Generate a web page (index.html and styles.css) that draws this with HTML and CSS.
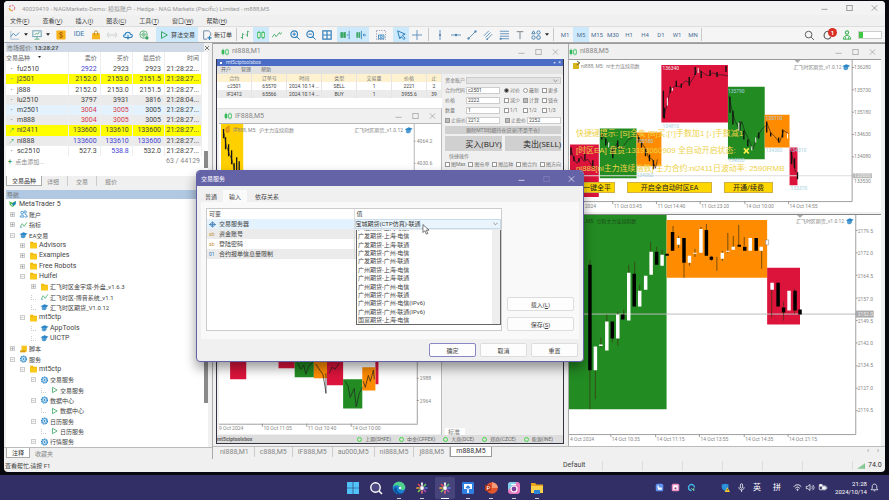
FILE: index.html
```html
<!DOCTYPE html>
<html lang="zh-CN">
<head>
<meta charset="utf-8">
<title>MetaTrader 5</title>
<link rel="stylesheet" href="styles.css">
</head>
<body>
<svg class="sprite" aria-hidden="true">
  <symbol id="candles" viewBox="0 0 12 12"><path d="M3.500 1v10M8.500 1v10" stroke="#35b85a"/><rect x="2" y="3" width="3" height="6" fill="#e9f8ec" stroke="#35b85a"/><rect x="7" y="3" width="3" height="6" fill="#e9f8ec" stroke="#35b85a"/></symbol>
  <symbol id="candles2" viewBox="0 0 12 12"><path d="M3 1v10M9 1v10" stroke="#35b85a"/><rect x="1" y="3" width="4" height="6" fill="#35b85a"/><rect x="7" y="3" width="4" height="6" fill="#d8f5de" stroke="#35b85a"/></symbol>
  <symbol id="folder" viewBox="0 0 12 12"><path d="M1 1h4l1 1.500h5V11H1z" fill="#f2b705"/><path d="M1 4h10v7H1z" fill="#fbc918"/></symbol>
  <symbol id="cap" viewBox="0 0 12 12"><path d="M0 5l6-3 6 2-5 3.500z" fill="#2a86c8"/><path d="M2.500 6v3.500c2 1.500 4.500 1 6-.5V6.500L7 8z" fill="#4aa3dc" stroke="#1d6fae" stroke-width=".6"/></symbol>
  <symbol id="gear" viewBox="0 0 12 12"><circle cx="6" cy="6" r="4.600" fill="#e3f2fd" stroke="#2a86c8" stroke-width="1.600" stroke-dasharray="2.400 1"/><circle cx="6" cy="6" r="3.500" fill="none" stroke="#2a86c8"/><path d="M5 4l3 2-3 2z" fill="#2a86c8"/></symbol>
  <symbol id="play" viewBox="0 0 12 12"><path d="M3 2l7 4-7 4z" fill="none" stroke="#3aa662" stroke-width="1.200"/></symbol>
  <symbol id="wave" viewBox="0 0 12 12"><path d="M1 9l3-5 3 4 4-6" fill="none" stroke="#3aa662" stroke-width="1.100"/><path d="M1 10l3-1" stroke="#2a86c8"/></symbol>
  <symbol id="people" viewBox="0 0 12 12"><g fill="none" stroke="#2a86c8" stroke-width="1.200"><circle cx="4" cy="4" r="2"/><path d="M1 10.500c0-4 6-4 6 0z"/><circle cx="8.500" cy="3" r="1.800"/><path d="M8 6.500c3 0 3.500 2 3.500 4H8.500"/></g></symbol>
  <symbol id="script" viewBox="0 0 12 12"><path d="M3 1h8v9H3z" fill="#f5c21b"/><path d="M1 8h8v3H1z" fill="#d99a0b"/></symbol>
  <symbol id="logo" viewBox="0 0 12 12"><path d="M1 2l5 2 5-3-1 6-4 4-4-4z" fill="#4cb648"/><path d="M5 6l6-4v4L7 9z" fill="#1d83c4"/><path d="M3 5l3 2v3z" fill="#fff"/></symbol>
  <symbol id="min" viewBox="0 0 12 12"><path d="M1.500 8h9" stroke="currentColor"/></symbol>
  <symbol id="max" viewBox="0 0 12 12"><rect x="2" y="2" width="8" height="8" fill="none" stroke="currentColor"/></symbol>
  <symbol id="close" viewBox="0 0 12 12"><path d="M2 2l8 8M10 2l-8 8" stroke="currentColor"/></symbol>
  <symbol id="caret" viewBox="0 0 6 4"><path d="M0 0h6L3 4z" fill="#222"/></symbol>
  <symbol id="chev" viewBox="0 0 6 4"><path d="M.5.5L3 3 5.500.5" fill="none" stroke="#777" stroke-width=".9"/></symbol>
  <symbol id="spider" viewBox="0 0 14 14"><g stroke-width="1.700" stroke-linecap="round"><path d="M7 2v2" stroke="#fff"/><path d="M3.500 3.500L5 5" stroke="#e24b5b"/><path d="M10.500 3.500L9 5" stroke="#58c06a"/><path d="M2 7h2" stroke="#f0ab32"/><path d="M12 7h-2" stroke="#5d78e0"/><path d="M3.500 10.500L5 9" stroke="#83c94b"/><path d="M10.500 10.500L9 9" stroke="#b34fb5"/><path d="M7 12v-2" stroke="#e5658b"/></g><circle cx="7" cy="7" r="1.900" fill="#fff"/></symbol>
</svg>

<div class="desktop">
<main class="app">
  <header class="titlebar">
    <svg class="ic8" viewBox="0 0 12 12"><circle cx="6" cy="6" r="4" fill="none" stroke="#e58b9b" stroke-width="2" stroke-dasharray="3 1.500"/><path d="M2 6a4 4 0 0 0 4 4" fill="none" stroke="#e2b54e" stroke-width="2"/></svg>
    <span>40029419 - NAGMarkets-Demo: 模拟账户 - Hedge - NAG Markets (Pacific) Limited - m888,M5</span>
    <div class="winctl wide"><button aria-label="最小化"><svg><use href="#min"/></svg></button><button aria-label="最大化"><svg><use href="#max"/></svg></button><button aria-label="关闭"><svg><use href="#close"/></svg></button></div>
  </header>
  <nav class="menubar"><a href="#">文件(<u>F</u>)</a><a href="#">查看(<u>V</u>)</a><a href="#">插入(<u>I</u>)</a><a href="#">图表(<u>C</u>)</a><a href="#">工具(<u>T</u>)</a><a href="#">窗口(<u>W</u>)</a><a href="#">帮助(<u>H</u>)</a></nav>

  <div class="toolbar">
    <button class="tool" aria-label="图表类型"><svg viewBox="0 0 12 12"><path d="M1 1v10h10" stroke="#9bb6cc"/><path d="M1 8l3-4 3 3 4-4" stroke="#3b7db4"/></svg></button>
    <button class="drop" aria-label="更多图表"><svg><use href="#caret"/></svg></button>
    <button class="tool" aria-label="模板"><svg viewBox="0 0 12 12"><rect x="1" y="1" width="10" height="7" stroke="#5795a8"/><path d="M3 6l2-2 2 1 2-3M3 11h6M6 8v3" stroke="#4aa87c"/></svg></button>
    <button class="drop" aria-label="更多模板"><svg><use href="#caret"/></svg></button>
    <button class="tool wide" aria-label="美元"><svg viewBox="0 0 12 12"><rect x=".5" y=".5" width="11" height="11" rx="1" fill="#f6b31b"/><path d="M8 4c-1-1.500-4-1-4 .3C4 6.300 8 5.500 8 7.500 8 9.500 4 9.300 4 8M6 2v8" stroke="#a35f00"/></svg></button>
    <button class="tool ide">IDE</button>
    <button class="tool" aria-label="市场"><svg viewBox="0 0 12 12"><path d="M1.500 4h9l.5 7H1z" fill="#f6b31b"/><path d="M4 6V3c0-2.500 4-2.500 4 0v3" stroke="#b9770a"/></svg></button>
    <button class="tool" aria-label="信号"><svg viewBox="0 0 12 12"><path d="M2 3c-1.500 2-1.500 4 0 6M4 4.500c-.8 1-.8 2 0 3M10 3c1.500 2 1.500 4 0 6M8 4.500c.8 1 .8 2 0 3" stroke="#b9bfc4"/><circle cx="6" cy="6" r=".8" fill="#b9bfc4"/></svg></button>
    <button class="tool" aria-label="云"><svg viewBox="0 0 12 12"><path d="M3 9C0 9 0 5.500 2.500 5.500 3 1.500 8.500 2 9 5c3 0 3 4 0 4z" stroke="#2e7fbc" stroke-width="1.300" fill="#d9edf9"/><path d="M6 6v5M4.500 9.500L6 11l1.500-1.500" stroke="#2e7fbc"/></svg></button>
    <button class="tool" aria-label="网络"><svg viewBox="0 0 12 12"><circle cx="5.500" cy="5.500" r="4.500" stroke="#55ad75"/><circle cx="5.500" cy="5.500" r="2" stroke="#55ad75"/><path d="M1 5.500h9M5.500 1v9" stroke="#8ac89f"/><circle cx="9.500" cy="9.500" r="2" fill="#3aa662"/></svg></button>
    <button class="tool label on algo"><svg><use href="#play"/></svg>算法交易</button>
    <button class="tool label"><svg viewBox="0 0 12 12"><path d="M2 1h6l2.500 2.500V7M6 11H2V1" stroke="#587a99"/><path d="M9 7v5M6.500 9.500h5" stroke="#2e7fbc" stroke-width="1.400"/></svg>新订单</button>
    <i class="sep"></i>
    <button class="tool" aria-label="柱状图"><svg viewBox="0 0 12 12"><path d="M3 4v7M1 9h2M3 5h2M9 1v7M7 6h2M9 2h2" stroke="#3aa662"/></svg></button>
    <button class="tool on" aria-label="蜡烛图"><svg><use href="#candles"/></svg></button>
    <button class="tool" aria-label="折线图"><svg viewBox="0 0 12 12"><path d="M0 9l3-4 2 3 4-5 1 2 2-2" stroke="#3aa662"/></svg></button>
    <button class="tool gap" aria-label="放大"><svg viewBox="0 0 12 12"><circle cx="5" cy="5" r="4" stroke="#2e7fbc" stroke-width="1.300"/><path d="M8 8l3.500 3.500M3 5h4M5 3v4" stroke="#2e7fbc" stroke-width="1.200"/></svg></button>
    <button class="tool" aria-label="缩小"><svg viewBox="0 0 12 12"><circle cx="5" cy="5" r="4" stroke="#2e7fbc" stroke-width="1.300"/><path d="M8 8l3.500 3.500M3 5h4" stroke="#2e7fbc" stroke-width="1.200"/></svg></button>
    <button class="tool" aria-label="平铺"><svg viewBox="0 0 12 12"><path d="M1 1h10v10H1zM6 1v10M1 6h10" stroke="#2e7fbc" stroke-width="1.400"/></svg></button>
    <button class="tool on gap" aria-label="自动滚动"><svg viewBox="0 0 12 12"><path d="M1 3h2v6H1zM4.500 3h2v6h-2z" fill="#3aa662" stroke="#3aa662"/><path d="M11 1v10M8 6h2" stroke="#2e7fbc"/></svg></button>
    <button class="tool on" aria-label="图表平移"><svg viewBox="0 0 12 12"><path d="M1 3h1v6H1zM3.500 3h1v6h-1z" fill="#3aa662" stroke="#3aa662"/><path d="M6.500 1v10M12 6H8.500M10 4.500L8.500 6 10 7.500" stroke="#2e7fbc"/></svg></button>
    <button class="tool gap2" aria-label="截图"><svg viewBox="0 0 12 12"><rect x=".5" y=".5" width="11" height="11" stroke="#88a" stroke-dasharray="1.500 1.500"/><path d="M3 6h6.500v4.500H3z" stroke="#2e7fbc"/><circle cx="6.300" cy="8" r="1.300" stroke="#2e7fbc"/></svg></button>
    <button class="tool on gap2" aria-label="光标"><svg viewBox="0 0 12 12"><path d="M2 1l9 4-3.500 1.500L11 10l-1.500 1.300L6 8l-1.500 2.500z" stroke="#2e7fbc" stroke-width="1.200"/></svg></button>
    <button class="tool" aria-label="十字线"><svg viewBox="0 0 12 12"><path d="M6 0v12M0 6h12" stroke="#4e86b4"/></svg></button>
    <i class="sep split"></i>
    <button class="tool" aria-label="垂直线"><svg viewBox="0 0 12 12"><path d="M6 0v12" stroke="#4e86b4"/><circle cx="6" cy="6" r="1.300" fill="#4e86b4"/></svg></button>
    <button class="tool" aria-label="水平线"><svg viewBox="0 0 12 12"><path d="M0 6h12" stroke="#4e86b4"/><circle cx="6" cy="6" r="1.500" fill="#4e86b4"/></svg></button>
    <button class="tool" aria-label="趋势线"><svg viewBox="0 0 12 12"><path d="M2 10l8-8" stroke="#4e86b4"/><circle cx="1.800" cy="10.200" r="1.400" fill="#4e86b4"/><circle cx="10.200" cy="1.800" r="1.400" fill="#4e86b4"/></svg></button>
    <button class="tool" aria-label="通道"><svg viewBox="0 0 12 12"><path d="M1 7l6-6M5 11l6-6M3 9l6-6" stroke="#4e86b4"/><circle cx="5" cy="11" r="1" fill="#4e86b4"/></svg></button>
    <button class="tool" aria-label="斐波那契"><svg viewBox="0 0 12 12"><path d="M1 1.500h11M1 4.500h11M1 7.500h11M1 10.500h11" stroke="#4e86b4"/><circle cx="2" cy="10.500" r="1.300" fill="#4e86b4"/></svg></button>
    <button class="tool" aria-label="文字"><svg viewBox="0 0 12 12"><path d="M2 2h8M6 2v9" stroke="#7d8790" stroke-width="1.200"/></svg></button>
    <button class="tool" aria-label="对象"><svg viewBox="0 0 12 12"><g stroke="#4e86b4" stroke-width="1.200"><path d="M3 1l2 3.500H1z"/><circle cx="9" cy="3" r="2"/><circle cx="3" cy="9" r="2"/><rect x="7" y="7" width="4" height="4" rx="1"/></g></svg></button>
    <button class="drop" aria-label="更多对象"><svg><use href="#caret"/></svg></button>
    <i class="sep split"></i>
    <button class="tool tf">M1</button><button class="tool tf on">M5</button><button class="tool tf">M15</button><button class="tool tf">M30</button><button class="tool tf">H1</button><button class="tool tf">H4</button><button class="tool tf">D1</button><button class="tool tf">W1</button><button class="tool tf">MN</button>
    <i class="sep"></i>
    <div class="right">
      <button class="tool" aria-label="搜索"><svg viewBox="0 0 12 12"><circle cx="5.500" cy="5.500" r="4" stroke="#444"/><path d="M8.500 8.500L12 12" stroke="#444"/></svg></button>
      <button class="tool bell" aria-label="通知"><svg viewBox="0 0 12 12"><path d="M8 2C3 0 0 5 2 9c2 3 7 2 7-1" stroke="#555" stroke-width="1.300"/></svg><b>1</b></button>
      <button class="tool" aria-label="账户"><svg viewBox="0 0 12 12"><circle cx="6" cy="3" r="2" stroke="#45b55b" stroke-width="1.300"/><path d="M1.500 11c0-6 9-6 9 0zM4 11V8M8 11V8" stroke="#45b55b" stroke-width="1.200"/></svg></button>
      <div class="level" role="img" aria-label="连接"><i></i></div>
    </div>
  </div>

  <div class="workspace">
    <aside class="side">
      <h2 class="panel-title">市场报价: <b>13:28:27</b><svg class="x"><use href="#close"/></svg></h2>
      <div class="market">
        <table>
          <thead><tr><th class="sym">交易品种 <svg><use href="#caret"/></svg></th><th>卖价</th><th>买价</th><th>最后价</th><th class="time">时间</th></tr></thead>
          <tbody>
            <tr><td><i>•</i>fu2510</td><td class="b">2922</td><td>2923</td><td>2923</td><td>21:28:22...</td></tr>
            <tr class="y"><td><i>•</i>j2501</td><td>2152.0</td><td>2153.0</td><td>2151.5</td><td>21:28:27...</td></tr>
            <tr><td><i>•</i>j888</td><td>2152.0</td><td>2153.0</td><td>2151.5</td><td>21:28:27...</td></tr>
            <tr class="g"><td><i>•</i>lu2510</td><td>3797</td><td>3931</td><td>3816</td><td>21:28:04...</td></tr>
            <tr class="s"><td><i>•</i>m2501</td><td class="r">3004</td><td class="r">3005</td><td>3005</td><td>21:28:27...</td></tr>
            <tr class="g"><td><i>•</i>m888</td><td class="r">3004</td><td class="r">3005</td><td>3005</td><td>21:28:27...</td></tr>
            <tr class="y"><td><i class="up">↗</i>ni2411</td><td>133600</td><td>133610</td><td>133600</td><td>21:28:27...</td></tr>
            <tr class="g"><td><i class="up">↗</i>ni888</td><td class="b">133600</td><td class="b">133610</td><td class="b">133600</td><td>21:28:27...</td></tr>
            <tr><td><i>•</i>sc2510</td><td>527.3</td><td class="b">538.8</td><td>532.0</td><td>21:28:27...</td></tr>
          </tbody>
        </table>
        <div class="add"><span><b>+</b> 点击添加...</span><span>63 / 44129</span></div>
      </div>
      <div class="tabs"><button class="act">交易品种</button><button>详细</button><button>交易</button><button>报价</button></div>
      <h2 class="panel-title nav-title">导航</h2>
      <ul class="tree">
        <li class="l0"><svg><use href="#logo"/></svg>MetaTrader 5</li>
        <li class="l1"><i>+</i><svg><use href="#people"/></svg><span>账户</span></li>
        <li class="l1"><i>+</i><svg><use href="#wave"/></svg><span>指标</span></li>
        <li class="l1"><i>−</i><svg><use href="#cap"/></svg><span>EA交易</span></li>
        <li class="l2"><i>+</i><svg><use href="#folder"/></svg>Advisors</li>
        <li class="l2"><i>+</i><svg><use href="#folder"/></svg>Examples</li>
        <li class="l2"><i>+</i><svg><use href="#folder"/></svg>Free Robots</li>
        <li class="l2"><i>−</i><svg><use href="#folder"/></svg>Huifei</li>
        <li class="l3"><i>+</i><svg><use href="#folder"/></svg><span>汇飞时区金字塔-外盘_v1.6.3</span></li>
        <li class="l3 leaf"><i></i><svg><use href="#wave"/></svg><span>汇飞时区-博音系统_v1.1</span></li>
        <li class="l3 leaf"><i></i><svg><use href="#cap"/></svg><span>汇飞时区期货_V1.0.12</span></li>
        <li class="l2"><i>−</i><svg><use href="#folder"/></svg>mt5ctp</li>
        <li class="l3 leaf"><i></i><svg><use href="#cap"/></svg>AppTools</li>
        <li class="l3 leaf"><i></i><svg><use href="#cap"/></svg>UICTP</li>
        <li class="l1"><i>+</i><svg><use href="#script"/></svg><span>脚本</span></li>
        <li class="l1"><i>−</i><svg><use href="#gear"/></svg><span>服务</span></li>
        <li class="l2"><i>−</i><svg><use href="#folder"/></svg>mt5ctp</li>
        <li class="l3"><i>−</i><svg><use href="#gear"/></svg><span>交易服务</span></li>
        <li class="l4 leaf"><i></i><svg><use href="#play"/></svg><span>交易服务</span></li>
        <li class="l3"><i>−</i><svg><use href="#gear"/></svg><span>数据中心</span></li>
        <li class="l4 leaf"><i></i><svg><use href="#play"/></svg><span>数据中心</span></li>
        <li class="l3"><i>−</i><svg><use href="#gear"/></svg><span>日历服务</span></li>
        <li class="l4 leaf"><i></i><svg><use href="#play"/></svg><span>日历服务</span></li>
        <li class="l3"><i>−</i><svg><use href="#gear"/></svg><span>行情服务</span></li>
      </ul>
      <div class="tabs bottom"><button class="act">注释</button><button>收藏夹</button></div>
    </aside>

    <div class="center">
      <div class="mdi">
        <section class="m1">
          <header class="child-title"><svg class="ic8"><use href="#candles2"/></svg>ni888,M1<div class="winctl"><button aria-label="最小化"><svg><use href="#min"/></svg></button><button aria-label="最大化"><svg><use href="#max"/></svg></button><button aria-label="关闭"><svg><use href="#close"/></svg></button></div></header>
          <div class="toolbox">
            <div class="tb-title"><i></i>mt5ctptoolsbox<span>▪ ×</span></div>
            <div class="tb-menu"><a href="#">开户</a><a href="#">管理</a><a href="#">帮助</a></div>
            <div class="tb-body">
              <div class="tb-left">
                <table class="orders">
                  <thead><tr><th>合约</th><th>订单号</th><th>时间</th><th>类型</th><th>交易量</th><th>价格</th><th class="cut">止</th></tr></thead>
                  <tbody><tr><td>c2501</td><td>65570</td><td>2024.10.14 ...</td><td>SELL</td><td>1</td><td>2221</td><td>2</td></tr>
                  <tr class="g"><td>IF2412</td><td>65566</td><td>2024.10.14 ...</td><td>BUY</td><td>1</td><td>3955.6</td><td>39</td></tr></tbody>
                </table>
                <section class="if-window">
                  <header class="child-title"><svg class="ic8"><use href="#candles2"/></svg>IF888,M5<div class="winctl"><button aria-label="最小化"><svg><use href="#min"/></svg></button><button aria-label="最大化"><svg><use href="#max"/></svg></button><button aria-label="关闭"><svg><use href="#close"/></svg></button></div></header>
                  <svg class="chart" viewBox="221 124 220 308" preserveAspectRatio="xMinYMin meet">
                    <path d="M221 124h220v308H221z" fill="#fff"/>
                    <path d="M223 125h22v70h-22z" fill="#ffd000"/>
                    <path d="M225.500 130v9M227.500 138v12M230.500 145v12M233.500 151v14M236 164v9M238.500 158v15M241 162v11" stroke="#15151f" stroke-width="1.300"/>
                    <path d="M226 134l2 12 3 8 3 7 3 12" stroke="#15151f" fill="none" stroke-width=".6"/>
                    <path d="M231 127v6h-3v-4zM236 129h4" stroke="#c77414" fill="#f0a21a" stroke-width=".7"/>
                    <text x="235" y="133">IF888, M5:  沪主力连续指数</text>
                    <text x="355" y="133">汇飞时区期货_v1.0.12</text>
                    <use href="#cap" x="405" y="127" width="8" height="8"/>
                    <path d="M221 124.500h220M414.500 125v230M414 142h2M414 164h2" stroke="#999" stroke-width=".7"/>
                    <text class="ax" x="417" y="144">4064.2</text><text class="ax" x="417" y="166">4030.6</text>
                    <path d="M232 340h16v38h-16zM280 340h16v27h-16zM328 340h16v44h-16zM376 350h3v33h-3z" fill="#dc143c"/>
                    <path d="M296 340h19v36h-19zM344 378h19v29h-19z" fill="#228b22"/>
                    <path d="M315 340h13v37h-13zM363 366h13v23h-13z" fill="#ff8c00"/>
                    <path d="M299 362l3 6 3-4 2 9 3-8 4-4M317 363l4 6 3 4 2 12 1 7v-20M330 372l3-6 3 2 4-6M346 380l3 5 2 11 4-9 2 18 3-13 3-6M364 380l2 6 3-12 2 6 3-11 1 9" stroke="#222" fill="none" stroke-width=".7"/>
                    <path d="M220 422.500h198M417.500 340v82M417 377h2M417 399h2M264 422v3M308 422v3M352 422v3" stroke="#888" stroke-width=".8"/>
                    <text class="ax" x="420" y="379">2988</text><text class="ax" x="420" y="401">2964</text>
                    <text class="ax" x="221" y="428">9 Oct 2024</text><text class="ax" x="265" y="428">10 Oct 11:05</text><text class="ax" x="309" y="428">11 Oct 10:40</text><text class="ax" x="353" y="428">14 Oct 10:00</text>
                  </svg>
                </section>
              </div>
              <form class="order-form">
                <div class="fr"><label for="acc">资金账户</label><span class="combo"><select id="acc"><option></option></select><svg><use href="#chev"/></svg></span></div>
                <div class="fr"><label for="code">合约代码</label><input id="code" type="text" value="c2501"><span class="opts"><label><input type="radio" name="pt" checked>对价</label><label><input type="radio" name="pt">最新</label><label><input type="checkbox">更多</label></span></div>
                <div class="fr"><label for="price">价格</label><input id="price" type="text" value="2222"><span class="opts"><label><input type="checkbox">减少</label><label><input type="checkbox" checked>计算</label><label><input type="checkbox">锁仓</label></span></div>
                <div class="fr"><label for="qty">数量</label><input id="qty" type="text" value="1"><span class="opts"><label><input type="checkbox">1/1</label><label><input type="checkbox">1/2</label><label><input type="checkbox">1/3</label></span></div>
                <div class="fr"><label><input type="checkbox" checked>止损价</label><input type="text" value="2212" aria-label="止损价"><label class="tp"><input type="checkbox" checked>止盈价</label><input type="text" value="2252" aria-label="止盈价"></div>
                <button type="button" class="wide">删除MT5明细持仓记录(不是平仓)</button>
                <div class="bs"><button type="button">买入(BUY)</button><button type="button">卖出(SELL)</button></div>
                <p class="legend">快捷操作</p>
                <div class="quick"><label><input type="checkbox">图Max</label><label><input type="checkbox">图仓单</label><label><input type="checkbox">图品种</label><label><input type="checkbox">图合约</label><label><input type="checkbox">图方向</label></div>
                <span class="std">标准</span>
              </form>
            </div>
            <footer class="tb-status"><b>mt5ctptoolsbox</b><span><i></i>上期(SHFE)</span><span><i></i>中金(CFFEX)</span><span><i></i>大商(DCE)</span><span><i></i>郑商(CZCE)</span><span><i></i>能源(INE)</span></footer>
          </div>
        </section>

        <div class="charts">
          <section class="ni">
            <header class="child-title"><svg class="ic8"><use href="#candles2"/></svg>ni888,M5<div class="winctl"><button aria-label="最小化"><svg><use href="#min"/></svg></button><button aria-label="最大化"><svg><use href="#max"/></svg></button><button aria-label="关闭"><svg><use href="#close"/></svg></button></div></header>
            <div class="plot">
              <svg class="chart" viewBox="569 59 312 153" preserveAspectRatio="xMinYMin meet">
                <path d="M570 144h29v53h-29zM662 64h67v58h-67zM791 147h8v38h-8z" fill="#dc143c"/>
                <path d="M600 128h37v50h-37zM729 86h37v73h-37z" fill="#228b22"/>
                <path d="M637 132h25v34h-25zM766 114h25v33h-25z" fill="#ff8c00"/>
                <path d="M570 175.500h284" stroke="#ddd"/>
                <path d="M571 149l3 10 3 4 4-7 3 5 4-2 4 6 4 4M602 133l4 6 4 8 3 8 4-12 4 7 4-6 4-5 4-2 4-4M638 134l4 8 4 6 3 9 4 2 3 9 2-9M664 118l4-16 3-13 5-4 5 1 5-6 5 2 3-5 5-9 5 4 5 3 5-3 5 2 5 0 5 1M730 95l3 14 3 11 4 8 3-7 3 10 4 8 4 10 4-12 5-8 4-4M768 122l4 10 4 4 5 6 4-12 5 3M792 150l3 12 2 10" fill="none" stroke="#1a1a1a" stroke-width=".6"/>
                <path d="M571 147v8M574 156v5M579 158v4M585 153v7M593 160v8M602 133v6M606 138v7M613 147v11M618 140v8M639 136v6M642 142v5M646 148v8M650 154v7M654 160v9M664 90v27M665 107v11M671 86v6M677 80v6M682 83v4M690 76v9M696 66v8M702 70v7M711 69v6M718 71v5M727 65v6M731 96v16M734 110v14M741 121v9M745 130v9M749 139v7M760 132v6M768 121v11M772 132v4M780 137v5M784 129v8M793 151v13M796 158v10M799 172v7" stroke="#111" stroke-width="1.400"/>
                <path d="M668 97v8M673 87v3M699 67v5M740 122v8M753 146v4M757 137v5M609 142v5M789 133v5" stroke="#fff" stroke-width="1"/>
                <path d="M569 201.500h285V59M854 66.500h2M854 89h2M854 111.500h2M854 134h2M854 156.500h2M613 201v3M657 201v3M701 201v3M746 201v3M790 201v3" fill="none" stroke="#888" stroke-width=".8"/>
                <path d="M796 59h6l-3 3z" fill="#aaa"/>
                <path d="M573 62h5v-1h1v7h-6z" fill="#d7b51b"/><path d="M577 60l3 2-3 2" stroke="#333" fill="none" stroke-width=".7"/>
                <text x="581" y="67">ni888, M5:  ni主力连续指数</text><text x="795" y="68">汇飞时区期货_v1.0.12</text><use href="#cap" x="844" y="62" width="8" height="8"/>
                <g class="ax"><text x="856" y="68">136280</text><text x="856" y="91">135730</text><text x="856" y="113">135180</text><text x="856" y="136">134630</text><text x="856" y="158">134080</text><text x="856" y="183">133530</text>
                <text x="585" y="208">2024</text><text x="614" y="208">11 Oct 03:45</text><text x="658" y="208">11 Oct 14:40</text><text x="702" y="208">11 Oct 23:20</text><text x="747" y="208">14 Oct 10:00</text><text x="791" y="208">14 Oct 14:55</text></g>
                <path d="M854 173h20v5h-20z" fill="#bbb"/><text x="856" y="177" class="wt">133600</text>
                <g class="lb"><text x="663" y="69" class="wt">136340</text><text x="663" y="127">134810</text><text x="729" y="92">135790</text><text x="729" y="162">134020</text><text x="767" y="119">135110</text><text x="767" y="152">134300</text><text x="791" y="152">134310</text><text x="792" y="190">133370</text><text x="637" y="143">135180</text><text x="637" y="177">134060</text></g>
                <g class="tips"><text x="576" y="136">快捷键提示: [S]全卖 [B]买;[↑]手数加1 [↓]手数减1</text><text x="576" y="153">[时区EA] 盘货:13193060909 全自动开启状态:</text><text x="576" y="171">ni888[ni主力连续指数] 主力合约:ni2411日波动率: 2590RMB</text></g>
                <path d="M745 148l5 5M750 148l-5 5" stroke="#fff04a" stroke-width="1.600"/>
              </svg>
              <div class="ea-btns"><button class="b1">一键全平</button><button class="b2">开启全自动时区EA</button><button class="b3">开通/续费</button></div>
            </div>
          </section>
          <section class="m888">
            <svg class="chart" viewBox="569 215 312 232" preserveAspectRatio="xMinYMin meet">
              <path d="M569 215h98v195h-98z" fill="#228b22"/><path d="M667 220h101v58H667z" fill="#ff8c00"/><path d="M768 268h33v57h-33z" fill="#dc143c"/>
              <path d="M569 314.500h288" stroke="#bbb"/>
              <path d="M590 260v150M595.500 371v29M601 338v10M607 315v10M612.500 339v4M618 312v34M624 310v5M629 265v8M635 262v12M640 285v6M651 242v11M657 247v5M662.500 250v5M673.500 226v6M679 236v12M684.500 263v15M690 263v3M695.500 249v8M701.500 227v2M707 224v6M712 256v5M717.500 257v14M723 251v10M728.500 233v20M734 236v12M739.500 225v21M745 237v9M762.500 251v18M772.500 290v28M784.500 302v19M795.500 289v25" stroke="#3c3410" stroke-width=".7"/>
              <path d="M595.500 347v24M601 345v1.500M607 322v29M618 315v24M629 273v48M640 291v16M646 276v14M651.500 252v23M662.500 255v11M679 238v7M690 256v7M695.500 253v1M701.500 229v24M723 253v6M728.500 251v1M734 247v3M751 238v13M762 247v4M773 283v7M790 291v20" stroke="#fff" stroke-width="3.500"/>
              <path d="M766.500 240h3v5h-3z" fill="#fff" stroke="#777" stroke-width=".5"/>
              <path d="M590 265v106M612.500 322v17M623 315v5M634.500 274v33M657 252v13M667.500 254v2M673 232v19M684.500 238v25M707 230v26M712 257v3M740 245v2M745.500 247v4M757 238v13M779 283v24M784.500 308v5M796 291v20M801 310v5" stroke="#000" stroke-width="3.500"/>
              <path d="M569 435.500h288V215M857 230.500h2M857 253h2M857 275.500h2M857 298.500h2M857 321h2M857 343.500h2M857 366.500h2M857 389h2M857 411.500h2M611 435v3M656 435v3M700 435v3M745 435v3M789 435v3" fill="none" stroke="#888" stroke-width=".8"/>
              <path d="M798 215h6l-3 3z" fill="#aaa"/>
              <text x="571" y="223" class="dk">m888, M5:  豆粕主力连续指数</text><text x="797" y="223">汇飞时区期货_v1.0.12</text><use href="#cap" x="847" y="217" width="8" height="8"/>
              <g class="ax"><text x="859" y="233">2179.5</text><text x="859" y="255">2172.0</text><text x="859" y="278">2164.5</text><text x="859" y="301">2157.0</text><text x="859" y="323">2149.5</text><text x="859" y="346">2142.0</text><text x="859" y="368">2134.5</text><text x="859" y="391">2127.0</text><text x="859" y="413">2119.5</text>
              <text x="570" y="442">4 Oct 2024</text><text x="612" y="442">14 Oct 10:35</text><text x="657" y="442">14 Oct 11:15</text><text x="701" y="442">14 Oct 13:55</text><text x="746" y="442">14 Oct 14:35</text><text x="790" y="442">14 Oct 21:15</text></g>
              <path d="M857 311h18v7h-18z" fill="#aaa"/><text x="859" y="316" class="wt">2152.0</text>
            </svg>
          </section>
        </div>
      </div>
      <div class="sheets"><button>ni888,M1</button><button>c888,M5</button><button>IF888,M5</button><button>au000,M5</button><button>ni888,M5</button><button>j888,M5</button><button class="act">m888,M5</button><span>‹</span><span>›</span></div>
    </div>
  </div>
  <footer class="status"><span class="help">查看帮忙,请按 F1</span><span class="profile">Default</span><i></i><i></i><i></i><i></i><i></i><i></i><span class="ping"><svg viewBox="0 0 12 8"><path d="M0 8L12 0v8z" fill="#7cc48a"/><path d="M3 8V5M6 8V3M9 8V1" stroke="#cfe8d4" stroke-width=".6"/></svg>74.0</span></footer>
</main>

<footer class="taskbar">
  <div class="apps">
    <button aria-label="开始"><svg viewBox="0 0 14 14"><path d="M1 1h5.700v5.700H1zM7.300 1H13v5.700H7.300zM1 7.300h5.700V13H1zM7.300 7.300H13V13H7.300z" fill="#4fc3f7"/></svg></button>
    <button aria-label="搜索"><svg viewBox="0 0 14 14"><circle cx="6.500" cy="6.500" r="4.700" fill="#4c4980" stroke="#fff" stroke-width="1.400"/><path d="M10 10l3 3" stroke="#fff" stroke-width="1.600"/></svg></button>
    <button class="run" aria-label="Edge"><svg viewBox="0 0 14 14"><circle cx="7" cy="7" r="6.300" fill="#1c7fd0"/><path d="M1 6C2-1 12-1 13.300 6c.3 4-5 4-5 1.500C8.500 4 3 3 1 6z" fill="#4fd08c"/><path d="M5 7c-1 3 2 6 6 5-4 3-9 0-9-4 1-2 2-2 3-1z" fill="#0b529c"/><circle cx="8" cy="7" r="1.300" fill="#d8f3ff"/></svg></button>
    <button class="run" aria-label="MetaTrader"><svg><use href="#spider"/></svg></button>
    <button class="run cur" aria-label="MetaTrader 5"><svg><use href="#spider"/></svg></button>
    <button class="run" aria-label="传输"><svg viewBox="0 0 14 14"><rect x="1" y="1" width="12" height="12" rx="1" fill="#2f7fe0"/><path d="M3 3h8v5H3z" fill="#fff"/><path d="M7 12V5M5 7l2-2 2 2" stroke="#2f7fe0" stroke-width="1.200" fill="none"/><path d="M7 12V8" stroke="#fff" stroke-width="1.600"/></svg></button>
    <button class="run" aria-label="PowerPoint"><svg viewBox="0 0 14 14"><circle cx="8" cy="7" r="5.800" fill="#e4572e"/><path d="M8 1.200V7h5.800A5.800 5.800 0 0 0 8 1.200z" fill="#f59a78"/><rect x="1" y="4" width="6" height="6" rx="1" fill="#b8371a"/><path d="M3.200 9V5.500h1.300c1.600 0 1.600 2 0 2H3.200" fill="none" stroke="#fff" stroke-width=".8"/></svg></button>
    <button class="run" aria-label="录屏"><svg viewBox="0 0 14 14"><rect x="1" y="1" width="12" height="12" rx="3" fill="#e77cc0"/><path d="M1 4c0-2 1-3 3-3h6l-9 8z" fill="#7fd0ec"/><circle cx="7" cy="8" r="3" fill="#7b3fa0" stroke="#fff" stroke-width="1.200"/><path d="M4 3.500h5" stroke="#fff"/></svg></button>
    <button class="run" aria-label="文件资源管理器"><svg viewBox="0 0 14 14"><path d="M1 2h4l1.500 1.500H13V12H1z" fill="#e8a51c"/><path d="M1 5h12v7H1z" fill="#fbd04a"/><path d="M4 9h6v4H4z" fill="#2b84d6"/></svg></button>
  </div>
  <div class="tray">
    <svg class="t1" viewBox="0 0 12 12"><rect x="1" y="1" width="10" height="10" rx="2" fill="#5f92f0"/><path d="M3 4l2-1v3h4v3H4z" fill="#fff"/></svg>
    <svg class="t2" viewBox="0 0 12 12"><rect x="1" y="1" width="10" height="10" rx="2" fill="#e88fc0"/><path d="M3 3h6v6H3z" fill="#fff"/><circle cx="6" cy="7" r="1.500" fill="#a34a90"/></svg>
    <svg class="t3" viewBox="0 0 12 12"><path d="M10 6A4 4 0 1 0 6 10" fill="none" stroke="#40b7e8" stroke-width="1.800"/><path d="M6 7l3 3M9 7v3" stroke="#8fa" stroke-width="1.200"/></svg>
    <svg class="t4" viewBox="0 0 12 12"><path d="M1 2l5-1 4 1v4c0 3-3 4-4 5-2-1-5-3-5-5z" fill="#2a93dc"/><path d="M8.500 5.500L12 12H5z" fill="#ffc928"/><path d="M8.500 8v2" stroke="#333"/></svg>
    <svg class="t5" viewBox="0 0 12 12"><g fill="none" stroke="#fff"><rect x="4.500" y="1" width="3" height="6" rx="1.500"/><path d="M2.500 5.500c0 5 7 5 7 0M6 9v3"/></g></svg>
    <span class="t6">英</span><span class="t7">拼</span>
    <svg class="t8" viewBox="0 0 12 12"><g fill="none" stroke="#fff" stroke-width="1.300"><path d="M1 5c3-3.500 7-3.500 10 0M3 7c2-2 4-2 6 0"/><circle cx="6" cy="9" r=".8"/></g></svg>
    <svg class="t9" viewBox="0 0 12 12"><path d="M1 4.500h2L6 2v8L3 7.500H1zM8 4c1.500 1 1.500 3 0 4M9.500 2.500c2.500 2 2.500 5 0 7" fill="none" stroke="#fff"/></svg>
    <svg class="t10" viewBox="0 0 12 12"><rect x="1" y="4" width="9" height="5" rx="1" fill="none" stroke="#fff"/><path d="M5 5h4v3H5zM11 5v3" fill="#fff" stroke="#fff" stroke-width=".8"/><path d="M3 1v4M1 2h4v2H1z" fill="#fff" stroke="#fff" stroke-width=".6"/></svg>
    <time>21:28<br>2024/10/14</time>
    <svg class="t11" viewBox="0 0 12 12"><path d="M1.500 9h9L9 7V4.500c0-4-6-4-6 0V7zM5 10.500h2" fill="none" stroke="#fff"/></svg>
  </div>
</footer>

<section class="dialog" role="dialog" aria-label="交易服务设置">
  <header><h1>交易服务</h1><div class="winctl"><button aria-label="最小化"><svg><use href="#min"/></svg></button><button class="dim" aria-label="最大化"><svg><use href="#max"/></svg></button><button aria-label="关闭"><svg><use href="#close"/></svg></button></div></header>
  <div class="dtabs"><button>普通</button><button class="act">输入</button><button>依存关系</button></div>
  <div class="dbody">
    <div class="props">
      <table>
        <thead><tr><th>可变</th><th>值</th></tr></thead>
        <tbody>
          <tr class="s"><td><svg viewBox="0 0 12 12"><circle cx="6" cy="6" r="3.500" fill="none" stroke="#4884ba" stroke-width="1.500"/><path d="M0 6h12M6 1v10" stroke="#4884ba" stroke-width="1.500"/></svg><label for="srv">交易服务器</label></td><td class="sel"><span class="combo"><select id="srv"><option>宝城期货(CTP仿真)-联通</option></select><svg><use href="#chev"/></svg></span></td></tr>
          <tr class="g"><td><em>ab</em>资金账号</td><td></td></tr>
          <tr><td><em>ab</em>登陆密码</td><td></td></tr>
          <tr class="g"><td><em class="n">01</em>合约报单信息量限制</td><td></td></tr>
        </tbody>
      </table>
      <ul class="options" role="listbox">
        <li class="part">广发期货-上海-联通</li><li>广发期货-上海-电信</li><li>广发期货-上海-联通</li><li>广发期货-广州-电信</li><li>广发期货-广州-联通</li><li>广州期货-上海-电信</li><li>广州期货-上海-联通</li><li>广州期货-广州-电信</li><li>广州期货-广州-联通</li><li>广州期货-广州-电信(IPv6)</li><li>广州期货-广州-联通(IPv6)</li><li>国富期货-上海-电信</li>
      </ul>
    </div>
    <div class="dside"><button>载入(<u>L</u>)</button><button>保存(<u>S</u>)</button></div>
  </div>
  <footer><button class="ok">确定</button><button>取消</button><button>重置</button></footer>
</section>
<svg class="cursor" viewBox="0 0 12 18"><path d="M1 1v13l3-3 2.500 5.500 2.500-1L6.500 10H11z" fill="#fff" stroke="#222"/></svg>
</div>
</body>
</html>
```

FILE: styles.css
```css
* { box-sizing: border-box; }
body { margin: 0; font: 7px/9px Roboto, "Noto Sans CJK SC", sans-serif; color: #444; background: #08080f; }
button, input, select { font: inherit; color: inherit; margin: 0; padding: 0; border: 0; background: none; border-radius: 0; }
a { color: inherit; text-decoration: none; }
ul { list-style: none; margin: 0; padding: 0; }
table { border-collapse: collapse; }
svg { display: block; flex: none; }
.sprite { position: absolute; width: 0; height: 0; }
.ic8 { width: 8px; height: 8px; }

.desktop { position: relative; display: flex; flex-direction: column; height: 100vh; min-height: 500px; overflow: hidden; }
.app { flex: 1; min-height: 0; display: flex; flex-direction: column; margin: 1px 4px 3px; background: #f0f0f0; border-radius: 4px; overflow: hidden; }

.titlebar { display: flex; align-items: center; gap: 6px; height: 14px; padding: 0 6px 0 4px; color: #999; background: #f3f3f3; font-size: 6px; }
.winctl { display: flex; gap: 8px; margin-left: auto; color: #999; }
.winctl button { display: block; }
.winctl svg { width: 9px; height: 8px; }
.winctl.wide { gap: 16px; color: #777; }
.menubar { display: flex; gap: 13px; height: 11px; padding-left: 6px; font-size: 6px; align-items: center; }

.toolbar { display: flex; align-items: center; height: 17px; border-top: 1px solid #ddd; border-bottom: 1px solid #aaa; padding: 0 3px; background: #f5f5f5; }
.tool { display: flex; flex: none; align-items: center; justify-content: center; gap: 2px; width: 16px; height: 15px; }
.tool svg { width: 10px; height: 10px; fill: none; }
.tool.wide { width: 19px; }
.tool.label { width: 38px; font-size: 6px; color: #333; }
.tool.algo { width: 42px; margin-left: 4px; }
.tool.ide { width: 18px; color: #3274b5; }
.tool.on { background: #cce8fb; }
.tool.tf { font-size: 6px; color: #4a6f95; }
.tool.gap { margin-left: 2px; }
.tool.gap2 { margin-left: 4px; }
.drop { width: 6px; flex: none; }
.drop svg { width: 4px; height: 3px; margin: auto; }
.sep { flex: none; width: 1px; height: 13px; background: #c8c8c8; }
.sep.split { margin: 0 3px; }
.toolbar .right { display: flex; align-items: center; gap: 3px; margin-left: auto; }
.bell { position: relative; }
.bell b { position: absolute; left: 8px; top: 1px; width: 9px; height: 9px; border-radius: 50%; background: #d93025; color: #fff; font-size: 6px; }
.level { width: 24px; height: 8px; border: 1px solid #ccc; background: #fff; }
.level i { display: block; width: 18%; height: 100%; background: #42c745; }

.workspace { flex: 1; min-height: 0; display: flex; }
.side { flex: none; width: 209px; display: flex; flex-direction: column; border-right: 1px solid #aaa; background: #f0f0f0; }
.panel-title { display: flex; align-items: center; margin: 0 8px 0 2px; height: 9px; padding-left: 1px; background: #cfdae6; font-size: 6px; font-weight: 400; color: #777; gap: 2px; }
.panel-title b { color: #555; }
.panel-title .x { width: 6px; height: 6px; margin: 0 -6px 0 auto; color: #000; }
.market { position: relative; height: 124px; margin: 0 4px 0 2px; background: #fff; padding-right: 6px; }
.market::after, .tree::after { content: ""; position: absolute; right: 0; bottom: 8px; width: 4px; height: 17px; background: #8a8a8a; }
.market table { width: 100%; height: 104px; table-layout: fixed; line-height: 8px; }
.market th, .market td { padding: 0 3px 0 0; text-align: right; border-right: 1px solid #eee; white-space: nowrap; }
.market th { font-size: 6px; font-weight: 400; color: #666; height: 12px; }
.market th:first-child, .market td:first-child { width: 62px; text-align: left; }
.market .time { width: 37px; }
.market th:last-child, .market td:last-child { padding-right: 2px; }
.market th svg { display: inline; width: 3px; height: 2px; vertical-align: 2px; margin-left: 6px; }
.market i { display: inline-block; width: 11px; font-style: normal; font-size: 6px; text-align: center; color: #7b96b0; }
.market i.up { color: #3aa662; }
.market .y { background: #ff0; }
.g { background: #ebebeb; }
.s { background: #e3f2fd; }
.market .b { color: #4545cf; }
.market .r { color: #d63a4a; }
.add { display: flex; justify-content: space-between; padding: 1px 2px 0; color: #888; font-size: 6px; }
.add span:last-child { font-size: 7px; }
.add b { color: #3aa662; margin-right: 2px; font-size: 7px; }
.tabs { display: flex; height: 14px; padding-left: 2px; font-size: 6px; color: #888; align-items: flex-start; }
.tabs button { height: 10px; padding: 0 8px; border-right: 1px solid #ccc; }
.tabs button:last-child { border-right: 0; }
.tabs .act { background: #fff; color: #333; border: 1px solid #aaa; border-top: 0; padding: 0 5px; margin-right: -3px; }
.nav-title { background: #b0c8e2; margin-right: 0; }
.tree { position: relative; flex: 1; min-height: 0; display: flex; flex-direction: column; margin: 0 4px 0 2px; background: #fff; overflow: hidden; color: #444; }
.tree::after { height: 80px; bottom: 44px; }
.tree li { flex: 1; min-height: 0; display: flex; align-items: center; padding-left: 2px; gap: 1px; white-space: nowrap; }
.tree span { font-size: 6px; }
.tree svg { width: 9px; height: 8px; }
.tree .l0 { gap: 2px; }
.tree i { width: 5px; height: 5px; border: 1px solid #ccc; font: 5px/3px Roboto, sans-serif; text-align: center; margin: 0 3px 0 2px; color: #777; background: #fafafa; }
.tree .leaf i { border-width: 0 0 1px 1px; border-style: dotted; background: none; }
.tree .l1 { padding-left: 2px; }
.tree .l2 { padding-left: 12px; }
.tree .l3 { padding-left: 23px; }
.tree .l4 { padding-left: 33px; }
.tabs.bottom { height: 12px; border-top: 1px solid #bbb; }

.center { flex: 1; min-width: 0; display: flex; flex-direction: column; }
.mdi { flex: 1; min-height: 0; display: grid; grid-template-columns: 356fr 316fr; border-top: 1px solid #999; border-bottom: 1px solid #bbb; }
.child-title { display: flex; flex: none; align-items: center; gap: 3px; height: 15px; padding: 0 4px 0 5px; color: #888; }
.m1 { display: flex; flex-direction: column; min-height: 0; padding: 0 4px 2px 3px; border-right: 1px solid #aaa; }
.toolbox { flex: 1; min-height: 0; display: flex; flex-direction: column; border: 1px solid #334; border-top: 0; font-size: 5px; line-height: 7px; }
.tb-title { display: flex; align-items: center; gap: 4px; height: 7px; background: #4a6cc4; color: #dde5fa; padding: 0 2px; }
.tb-title i { width: 2px; height: 2px; background: #fff; margin-left: 1px; }
.tb-title span { margin-left: auto; }
.tb-menu { display: flex; gap: 10px; height: 8px; padding-left: 4px; background: #e2e2e2; color: #666; }
.tb-body { flex: 1; min-height: 0; display: flex; }
.tb-left { flex: 1; min-width: 0; display: flex; flex-direction: column; background: #fff; }
.orders { width: 100%; table-layout: fixed; text-align: center; line-height: 8px; white-space: nowrap; }
.orders th, .orders td { padding: 0; overflow: hidden; border-right: 1px solid #e5e5e5; }
.orders th { background: #fdf1cf; font-weight: 400; color: #777; }
.orders .cut { width: 15px; }
.if-window { flex: 1; min-height: 0; display: flex; flex-direction: column; margin-top: 10px; padding: 0 0 1px 2px; background: #f0f0f0; font-size: 7px; border-right: 1px solid #bbb; border-top: 1px solid #ddd; overflow: hidden; }
.if-window .child-title { height: 14px; }
.chart { display: block; width: 100%; flex: 1; min-height: 0; background: #fff; }
.chart text { font-size: 5px; fill: #888; white-space: pre; }
.chart .ax, .chart .ax text { fill: #888; }
.chart .lb text { fill: #a8d0e0; }
.chart text.wt, .chart .lb text.wt { fill: #eee; }
.chart text.dk { fill: #1b4b1b; }
.chart .tips text { font-size: 8px; fill: #eed24a; font-family: "Liberation Sans", "Noto Sans CJK SC", sans-serif; }
.combo { position: relative; display: block; }
.combo select { display: block; width: 100%; appearance: none; }
.combo svg { position: absolute; right: 3px; top: 3px; width: 5px; height: 4px; pointer-events: none; }
.order-form { position: relative; flex: none; width: 121px; padding: 1px 2px 0 3px; color: #777; background: #f0f0f0; display: flex; flex-direction: column; }
.fr { display: flex; align-items: center; height: 10px; white-space: nowrap; }
.fr > label { width: 21px; }
.fr > input { width: 34px; height: 7px; border: 1px solid #ccc; background: #fff; padding-left: 1px; color: #444; }
.fr .combo { flex: 1; }
.fr select { height: 7px; border: 1px solid #ccc; background: #e3e3e3; }
.fr .combo svg { top: 2px; }
.fr > .tp { margin-left: 5px; width: 22px; }
.opts { display: flex; gap: 3px; margin-left: 4px; }
.opts label { width: 16px; overflow: hidden; }
.order-form label { display: flex; align-items: center; gap: 1px; }
.order-form [type=checkbox], .order-form [type=radio] { appearance: none; flex: none; width: 5px; height: 5px; border: 1px solid #999; background: #fff; }
.order-form [type=radio] { border-radius: 50%; }
.order-form [type=radio]:checked { background: #333; }
.order-form [type=checkbox]:checked { background: #bbb; }
.order-form .wide { height: 8px; margin-top: 1px; background: #d0d0d0; }
.bs { display: grid; grid-template-columns: 1fr 1fr; gap: 3px; margin-top: 2px; }
.bs button { height: 15px; background: #d0d0d0; font: 8px/15px "Open Sans", "Noto Sans CJK SC", sans-serif; color: #222; text-align: right; }
.legend { margin: 2px 0 1px 4px; }
.quick { display: flex; justify-content: space-between; }
.std { margin-top: auto; background: #fff; width: 20px; padding-left: 3px; font-size: 6px; }
.tb-status { display: flex; align-items: center; gap: 8px; height: 8px; background: #ddd; color: #666; padding-right: 10px; white-space: nowrap; }
.tb-status b { margin-right: auto; }
.tb-status span { display: flex; align-items: center; gap: 3px; }
.tb-status i { width: 5px; height: 5px; border: 1px solid #42d745; border-radius: 50%; }

.charts { display: flex; flex-direction: column; min-height: 0; padding-right: 4px; }
.charts .child-title { padding-left: 0; }
.ni { flex: none; }
.plot { position: relative; height: 153px; border-top: 1px solid #999; }
.plot .chart { height: 100%; }
.ea-btns { position: absolute; left: 0; right: 0; top: 122px; display: flex; gap: 12px; padding-left: 10px; }
.ea-btns button { height: 11px; background: #ffd700; border: 1px solid #d0b040; color: #222; font-size: 7px; line-height: 8px; }
.b1 { width: 36px; }
.b2 { width: 85px; }
.b3 { width: 49px; }
.m888 { flex: 1; min-height: 0; margin-top: 2px; border-top: 1px solid #888; display: flex; }
.sheets { display: flex; flex: none; height: 12px; color: #888; padding: 0 2px; }
.sheets button { height: 10px; padding: 0 5px; border-right: 1px solid #ccc; }
.sheets .act { background: #fff; border: 1px solid #999; border-top: 0; color: #333; }
.sheets span { width: 10px; text-align: center; }
.sheets .act + span { margin-left: auto; }

.status { flex: none; display: flex; height: 13px; align-items: center; }
.status .help { font-size: 6px; padding-left: 1px; flex: 1; color: #444; }
.status .profile { width: 39px; }
.status i { width: 40px; height: 10px; border-left: 1px solid #ddd; }
.ping { display: flex; align-items: center; gap: 3px; padding: 0 2px 0 4px; border-left: 1px solid #ddd; color: #333; width: 33px; margin-left: 10px; }
.ping svg { width: 8px; height: 6px; }

.taskbar { flex: none; display: flex; height: 25px; background: #322f66; color: #fff; position: relative; align-items: center; justify-content: flex-end; padding-right: 10px; }
.apps { display: flex; position: absolute; left: 0; right: 0; justify-content: center; gap: 3px; }
.apps button { width: 20px; height: 22px; position: relative; border-radius: 2px; }
.apps svg { width: 14px; height: 14px; margin: 0 auto; }
.apps .run::after { content: ""; position: absolute; left: 8px; bottom: 0; width: 4px; height: 1px; background: #ccc; }
.apps .cur { background: #47447c; }
.apps .cur::after { left: 6px; width: 8px; background: #fff; }
.tray { display: flex; align-items: center; position: relative; gap: 7px; font-size: 8px; }
.tray svg { width: 9px; height: 9px; }
.tray .t4 { margin-left: 18px; }
.tray .t7 { margin: 0 5px; }
.tray .t9, .tray .t10 { margin-left: -4px; width: 10px; }
.tray time { font-size: 6px; line-height: 8px; text-align: right; }
.tray time + svg { margin-left: -4px; }

.dialog { position: absolute; left: 196px; top: 170px; width: 388px; height: 192px; display: flex; flex-direction: column; border-radius: 4px; overflow: hidden; background: #f0f0f0; border: 1px solid #6563a8; box-shadow: 0 6px 12px rgba(0,0,0,.4); font-size: 6px; color: #444; }
.dialog header { display: flex; align-items: center; height: 15px; background: #6563a8; color: #fff; padding: 0 7px 0 4px; }
.dialog h1 { margin: 0; font: inherit; }
.dialog .winctl { gap: 16px; color: #fff; }
.dialog .dim { color: #8583bb; }
.dtabs { display: flex; height: 16px; padding: 4px 4px 0; }
.dtabs button { width: 20px; }
.dtabs .act { background: #fafafa; width: 24px; margin: 0 4px 0 2px; }
.dtabs button:last-child { width: 32px; }
.dbody { flex: 1; display: flex; gap: 5px; margin: 0 4px; padding: 6px 5px 8px; background: #f9f9f9; }
.props { position: relative; flex: 1; background: #fff; border: 1px solid #ccc; }
.props table { width: 100%; table-layout: fixed; line-height: 8px; }
.props th, .props td { height: 10px; padding: 0 1px 0 2px; font-weight: 400; text-align: left; }
.props tr > :first-child { border-right: 1px solid #ddd; }
.props td > svg, .props em { display: inline-block; width: 7px; height: 7px; margin-right: 3px; vertical-align: middle; font-style: normal; font-size: 5px; color: #c79c4a; line-height: 7px; }
.props .n { color: #2e7fbc; }
.props select { height: 10px; background: #e9f4fc; border: 1px solid #c4dcee; color: #333; }
.props .sel { padding: 0; }
.options { position: absolute; left: 149px; right: 0; top: 21px; height: 95px; display: flex; flex-direction: column; justify-content: space-between; background: #fff; border: 1px solid #666; border-top: 0; line-height: 8px; padding-left: 1px; }
.options .part { height: 2px; display: flex; align-items: flex-end; overflow: hidden; }
.options::after { content: ""; position: absolute; right: 0; top: 0; bottom: 0; width: 8px; background: #eee; }
.dside { width: 67px; display: flex; flex-direction: column; justify-content: flex-end; gap: 6px; }
.dialog .dside button, .dialog footer button { height: 14px; background: #fdfdfd; border: 1px solid #ddd; border-radius: 2px; }
.dialog footer { display: flex; justify-content: flex-end; gap: 4px; height: 22px; padding: 4px 5px 0; }
.dialog footer button { width: 47px; }
.dialog footer .ok { border-color: #8886c4; }
.cursor { position: absolute; left: 422px; top: 224px; width: 8px; height: 11px; }
```
